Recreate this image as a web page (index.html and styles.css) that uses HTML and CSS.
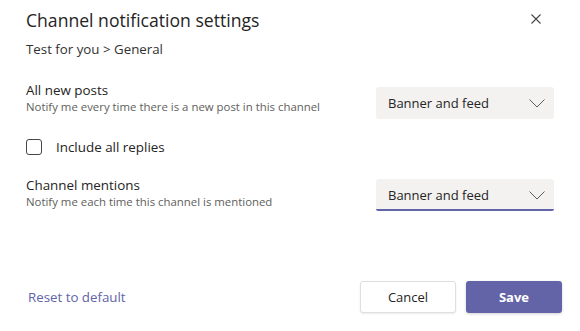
FILE: index.html
```html
<!DOCTYPE html>
<html lang="en">
<head>
<meta charset="utf-8">
<title>Channel notification settings</title>
<link rel="stylesheet" href="styles.css">
</head>
<body>
<div class="dialog">
  <header class="header">
    <h1 class="title">Channel notification settings</h1>
    <button class="close" aria-label="Close">
      <svg width="10" height="10" viewBox="0 0 10 10"><path d="M0.5 0.5 L9.5 9.5 M9.5 0.5 L0.5 9.5" stroke="#484644" stroke-width="1.1" fill="none"/></svg>
    </button>
  </header>
  <div class="crumb">Test for you &gt; General</div>

  <div class="setting first">
    <div class="info">
      <div class="label">All new posts</div>
      <div class="desc">Notify me every time there is a new post in this channel</div>
    </div>
    <div class="select">
      <span>Banner and feed</span>
      <svg class="chev" width="16" height="9" viewBox="0 0 16 9"><path d="M0.5 0.5 L8 8 L15.5 0.5" stroke="#605e5c" stroke-width="1" fill="none"/></svg>
    </div>
  </div>

  <label class="check">
    <span class="box"></span>
    <span>Include all replies</span>
  </label>

  <div class="setting second">
    <div class="info">
      <div class="label">Channel mentions</div>
      <div class="desc">Notify me each time this channel is mentioned</div>
    </div>
    <div class="select focused">
      <span>Banner and feed</span>
      <svg class="chev" width="16" height="9" viewBox="0 0 16 9"><path d="M0.5 0.5 L8 8 L15.5 0.5" stroke="#605e5c" stroke-width="1" fill="none"/></svg>
    </div>
  </div>

  <footer class="footer">
    <a class="reset" href="#">Reset to default</a>
    <div class="actions">
      <button class="btn cancel">Cancel</button>
      <button class="btn save">Save</button>
    </div>
  </footer>
</div>
</body>
</html>
```
FILE: styles.css
```css
* { box-sizing: border-box; }
html, body { margin: 0; padding: 0; background: #fff; }
body {
  font-family: "Open Sans", "Noto Sans", sans-serif;
  color: #252423;
  width: 580px;
  height: 331px;
  overflow: hidden;
}
.dialog {
  padding: 6px 18px 0 26px;
  height: 331px;
  display: flex;
  flex-direction: column;
}
.header {
  display: flex;
  justify-content: space-between;
  align-items: center;
  height: 28px;
}
.title {
  margin: 0;
  font-size: 17.6px;
  font-weight: 400;
  line-height: 28px;
}
.close {
  border: 0;
  background: none;
  padding: 0;
  width: 10px;
  height: 10px;
  margin-right: 21px;
  margin-top: -2px;
  display: flex;
}
.crumb {
  font-size: 13.3px;
  line-height: 20px;
  margin-top: 5px;
  color: #323130;
}
.setting {
  display: flex;
  justify-content: space-between;
  align-items: flex-start;
  padding-right: 8px;
}
.setting.first { margin-top: 22px; }
.setting.second { margin-top: 20px; }
.label {
  font-size: 13.4px;
  line-height: 18px;
}
.desc {
  font-size: 11.4px;
  line-height: 15px;
  color: #605e5c;
}
.select {
  width: 178px;
  height: 32px;
  background: #f3f2f1;
  border-radius: 3px;
  display: flex;
  align-items: center;
  justify-content: space-between;
  padding: 0 9px 0 12px;
  font-size: 13px;
  margin-top: 6px;
}
.select.focused {
  border-bottom: 2px solid #6264a7;
  border-radius: 3px 3px 2px 2px;
  margin-top: 3px;
  padding-top: 2px;
}
.chev { display: block; }
.check {
  display: flex;
  align-items: center;
  margin-top: 19px;
  font-size: 13.4px;
  line-height: 18px;
}
.box {
  width: 16px;
  height: 16px;
  border: 1px solid #484644;
  border-radius: 3px;
  margin-right: 14px;
}
.footer {
  margin-top: auto;
  margin-bottom: 18px;
  display: flex;
  justify-content: space-between;
  align-items: center;
}
.reset {
  color: #6264a7;
  text-decoration: none;
  font-size: 13.3px;
  margin-left: 2px;
}
.actions { display: flex; gap: 10px; }
.btn {
  width: 96px;
  height: 32px;
  border-radius: 3px;
  font-family: inherit;
  font-size: 13px;
}
.cancel {
  background: #fff;
  border: 1px solid #e1dfdd;
  color: #252423;
  box-shadow: 0 1px 2px rgba(0,0,0,0.08);
}
.save {
  background: #6264a7;
  border: 0;
  color: #fff;
  font-weight: 700;
  box-shadow: 0 1px 3px rgba(0,0,0,0.18);
}
```
